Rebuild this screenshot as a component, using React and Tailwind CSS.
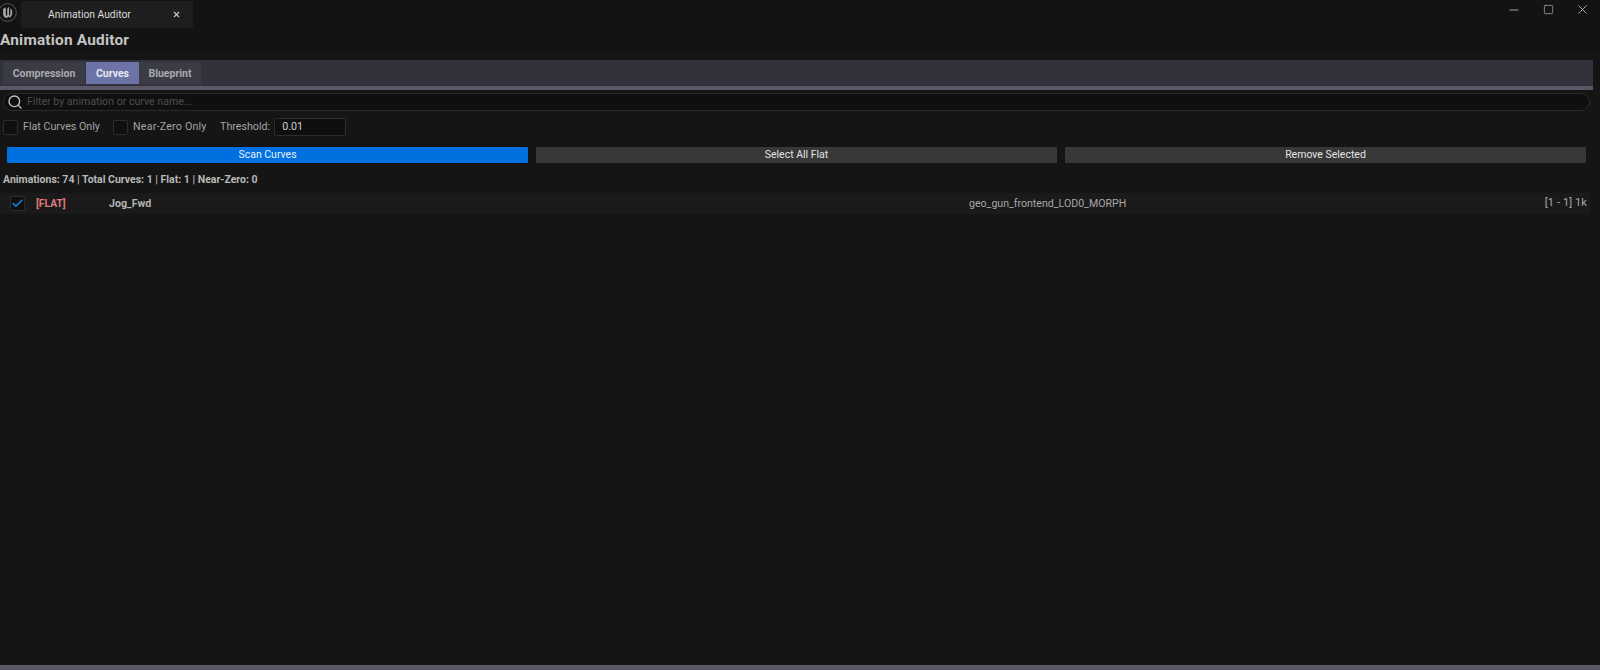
import React from "react";
import { Search, X, Minus, Square, Check } from "lucide-react";

const UnrealLogo = () => (
  <svg viewBox="0 0 20 20" className="w-[19px] h-[19px]" fill="none">
    <circle cx="10" cy="10" r="9.3" stroke="#6e6e6e" strokeWidth="0.8" />
    <path d="M5.2 6.6 L8.2 4.6 L8.2 12.4 C8.2 13.4 9 13.6 9.7 13 L9.7 6 L11.6 4 L11.6 13.4 L13 12.2 L13 5.4 C14.6 6.6 15 8 15 10 C15 12.4 14 14.4 12.2 15.4 L11.4 14.2 C10 15.8 8.4 16 7 15 C5.8 14.2 5.4 13 5.4 11.4 L5.4 7.4 Z" fill="#a8a8a8" />
  </svg>
);

const CheckBox = ({ checked }) => (
  <div className="w-[15px] h-[15px] shrink-0 rounded-[2px] bg-[#0f0f0f] border border-[#2c2c2c] flex items-center justify-center">
    {checked && <Check className="w-[13px] h-[13px] text-[#1a7fe8]" strokeWidth={3} />}
  </div>
);

const ActionButton = ({ label, primary }) => (
  <div
    className={
      "flex-1 h-4 rounded-[1px] flex items-center justify-center text-[10.5px] " +
      (primary ? "bg-[#0070e0] text-[#e8f0fa]" : "bg-[#383838] text-[#e4e4e4]")
    }
  >
    {label}
  </div>
);

const App = () => {
  return (
    <div
      className="w-[1600px] h-[670px] overflow-hidden flex flex-col bg-[#151515] text-[#c0c0c0]"
      style={{ fontFamily: "Roboto, 'Open Sans', sans-serif" }}
    >
      <div className="h-[28px] shrink-0 flex items-start bg-[#131313]">
        <div className="w-[21px] h-[27px] shrink-0 pt-[3px] -ml-[2px] mr-[2px]">
          <UnrealLogo />
        </div>
        <div className="w-[172px] h-[27px] mt-[1px] bg-[#1e1e1e] rounded-[2px] flex items-center pl-[27px] pr-[12px] justify-between text-[10.3px] text-[#dcdcdc]">
          <span>Animation Auditor</span>
          <X className="w-[9px] h-[9px] text-[#c8c8c8]" strokeWidth={3} />
        </div>
        <div className="ml-auto flex items-center pt-[2px] text-[#b4b4b4]">
          <Minus className="w-[14px] h-[14px] mr-[22px]" strokeWidth={1.5} />
          <Square className="w-[11px] h-[11px] mr-[21px]" strokeWidth={1.5} />
          <X className="w-[15px] h-[15px] mr-[10px]" strokeWidth={1.5} />
        </div>
      </div>

      <div className="h-[27px] shrink-0 pt-[2px] bg-[#131313] border-b border-[#181818]">
        <div className="text-[15.4px] leading-[20px] font-bold text-[#c4c4c4] tracking-[0.2px]">Animation Auditor</div>
      </div>

      <div className="h-[5px] shrink-0" />

      <div className="h-[30px] shrink-0 w-[1593px] bg-[#32323d] flex flex-col">
        <div className="h-[26px] pt-[2px] pl-[3px] flex text-[10.5px] font-bold">
          <div className="w-[82px] h-[22px] pt-[1px] bg-[#3a3b44] text-[#a9aab0] flex items-center justify-center">Compression</div>
          <div className="w-[53px] h-[22px] pt-[1px] ml-[1px] bg-[#6c73a6] text-[#e6e8f2] flex items-center justify-center">Curves</div>
          <div className="w-[62px] h-[22px] pt-[1px] bg-[#3a3b44] text-[#a9aab0] flex items-center justify-center">Blueprint</div>
        </div>
        <div className="h-[4px] bg-[#5a5866]" />
      </div>

      <div className="h-[18px] shrink-0 mt-[3px] ml-[3px] w-[1587px] rounded-full bg-[#0f0f0f] border border-[#2a2a2a] flex items-center pl-[3px] text-[10.6px] text-[#4e4e4e]">
        <Search className="w-[16px] h-[16px] mr-[4px] text-[#c4c4c4]" strokeWidth={2} />
        <span>Filter by animation or curve name...</span>
      </div>

      <div className="h-[18px] shrink-0 mt-[7px] pl-[3px] flex items-center text-[10.7px] text-[#a4a4a4]">
        <CheckBox />
        <span className="ml-[5px] w-[90px]">Flat Curves Only</span>
        <CheckBox />
        <span className="ml-[5px] w-[87px] tracking-[0.2px]">Near-Zero Only</span>
        <span className="mt-[1px]">Threshold:</span>
        <div className="ml-[4px] w-[72px] h-[18px] rounded-[2px] bg-[#0f0f0f] border border-[#2c2c2c] pl-[7px] flex items-center text-[#d0d0d0]">0.01</div>
      </div>

      <div className="shrink-0 mt-[11px] pl-[7px] w-[1586px] flex gap-[8px]">
        <ActionButton label="Scan Curves" primary />
        <ActionButton label="Select All Flat" />
        <ActionButton label="Remove Selected" />
      </div>

      <div className="h-[14px] shrink-0 mt-[10px] pl-[3px] flex items-center text-[10.5px] font-bold text-[#b8b8b8]">
        Animations: 74 | Total Curves: 1 | Flat: 1 | Near-Zero: 0
      </div>

      <div className="h-[21px] shrink-0 mt-[6px] w-[1590px] bg-[#1a1a1a] flex items-center pl-[10px] pr-[3px] text-[10.6px]">
        <CheckBox checked />
        <span className="ml-[11px] w-[73px] font-bold text-[#e07a7a] text-[10.3px]">[FLAT]</span>
        <span className="w-[860px] font-bold text-[#b4b4b4]">Jog_Fwd</span>
        <span className="text-[#a8a8a8]">geo_gun_frontend_LOD0_MORPH</span>
        <span className="ml-auto text-[#a8a8a8] text-[11px] tracking-[0.1px]">[1 - 1] 1k</span>
      </div>

      <div className="flex-1" />
      <div className="h-[5px] shrink-0 bg-[#5a5866]" />
    </div>
  );
};

export default App;
